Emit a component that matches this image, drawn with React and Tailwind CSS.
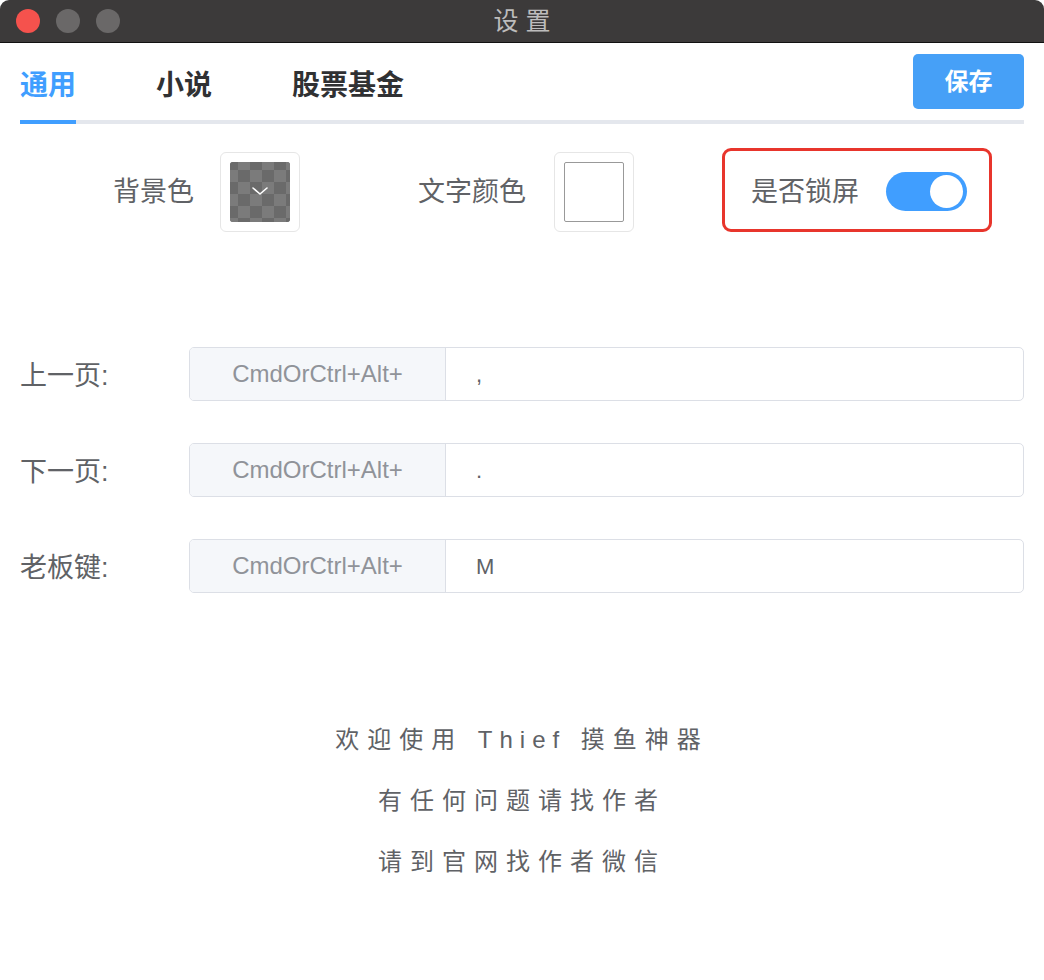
import React from "react";

const font = { fontFamily: '"Liberation Sans", "Noto Sans CJK SC", sans-serif' };

function Checker() {
  return (
    <div className="w-[60px] h-[60px] rounded-[3px] overflow-hidden bg-[#6a6a6a]">
      <svg width="60" height="60" className="block">
        <defs>
          <pattern id="chk" width="24" height="24" patternUnits="userSpaceOnUse" x="-4" y="-4">
            <rect width="24" height="24" fill="#6a6a6a" />
            <rect x="12" y="0" width="12" height="12" fill="#7b7b7b" />
            <rect x="0" y="12" width="12" height="12" fill="#7b7b7b" />
          </pattern>
        </defs>
        <rect width="60" height="60" fill="url(#chk)" />
        <path d="M23 26 L30 32 L37 26" fill="none" stroke="#ffffff" strokeWidth="1.6" strokeLinecap="round" strokeLinejoin="round" />
      </svg>
    </div>
  );
}

function ShortcutRow({ label, value }) {
  return (
    <div className="flex items-center h-[54px]">
      <div className="w-[169px] text-[27px] text-[#606266] leading-none pt-[4px]">{label}</div>
      <div className="flex-1 flex h-[54px] border border-[#dcdfe6] rounded-[5px] overflow-hidden">
        <div className="w-[256px] bg-[#f5f7fa] border-r border-[#dcdfe6] flex items-center justify-center text-[24px] text-[#909399]">
          CmdOrCtrl+Alt+
        </div>
        <div className="flex-1 flex items-center pl-[30px] text-[22px] text-[#606266]">{value}</div>
      </div>
    </div>
  );
}

export default function App() {
  return (
    <div className="w-[1044px] h-[980px] bg-white overflow-hidden" style={font}>
      {/* title bar */}
      <div className="h-[43px] bg-[#3c3a3a] rounded-t-[9px] border-b border-[#111] grid grid-cols-[1fr_auto_1fr] items-center">
        <div className="flex items-center gap-[16px] pl-[16px]">
          <div className="w-[24px] h-[24px] rounded-full bg-[#f5524d]" />
          <div className="w-[24px] h-[24px] rounded-full bg-[#6a6868]" />
          <div className="w-[24px] h-[24px] rounded-full bg-[#6a6868]" />
        </div>
        <div className="text-[25px] text-[#bdbcbc] tracking-[7px] pl-[7px] leading-none">设置</div>
        <div />
      </div>

      <div className="px-[20px]">
        {/* tabs */}
        <div className="flex items-start justify-between h-[77px]">
          <div className="flex gap-[80px] mt-[28px] text-[28px] font-bold leading-[30px] text-[#303133]">
            <span className="text-[#409eff]">通用</span>
            <span>小说</span>
            <span>股票基金</span>
          </div>
          <div className="mt-[11px] w-[111px] h-[55px] rounded-[5px] bg-[#46a0f7] text-white text-[24px] font-bold flex items-center justify-center">
            保存
          </div>
        </div>
        <div className="h-[4px] bg-[#e4e7ed]">
          <div className="w-[56px] h-full bg-[#409eff]" />
        </div>

        {/* color row */}
        <div className="flex items-center h-[84px] mt-[24px]">
          <span className="ml-[93px] text-[27px] text-[#606266] leading-none pt-[5px]">背景色</span>
          <div className="ml-[26px] mt-[3px] w-[80px] h-[80px] border border-[#e6e6e6] rounded-[6px] flex items-center justify-center">
            <Checker />
          </div>
          <span className="ml-[118px] text-[27px] text-[#606266] leading-none pt-[5px]">文字颜色</span>
          <div className="ml-[28px] mt-[3px] w-[80px] h-[80px] border border-[#e6e6e6] rounded-[6px] flex items-center justify-center">
            <div className="w-[60px] h-[60px] border border-[#999] rounded-[2px] bg-white" />
          </div>
          <div className="ml-[88px] w-[270px] h-[84px] border-[3px] border-[#e8352c] rounded-[9px] flex items-center pl-[26px]">
            <span className="text-[27px] text-[#606266] leading-none pt-[4px]">是否锁屏</span>
            <div className="ml-[27px] mt-[3px] w-[81px] h-[39px] rounded-full bg-[#409eff] flex items-center justify-end pr-[4px]">
              <div className="w-[33px] h-[33px] rounded-full bg-white" />
            </div>
          </div>
        </div>

        {/* shortcuts */}
        <div className="mt-[115px] flex flex-col gap-[42px]">
          <ShortcutRow label="上一页:" value="," />
          <ShortcutRow label="下一页:" value="." />
          <ShortcutRow label="老板键:" value="M" />
        </div>

        {/* footer text */}
        <div className="mt-[116px] flex flex-col items-center text-[24px] text-[#606266] leading-[61px] tracking-[8px]">
          <div>
            欢迎使用 <span className="tracking-[7px]">Thief</span> 摸鱼神器
          </div>
          <div>有任何问题请找作者</div>
          <div>请到官网找作者微信</div>
        </div>
      </div>
    </div>
  );
}
